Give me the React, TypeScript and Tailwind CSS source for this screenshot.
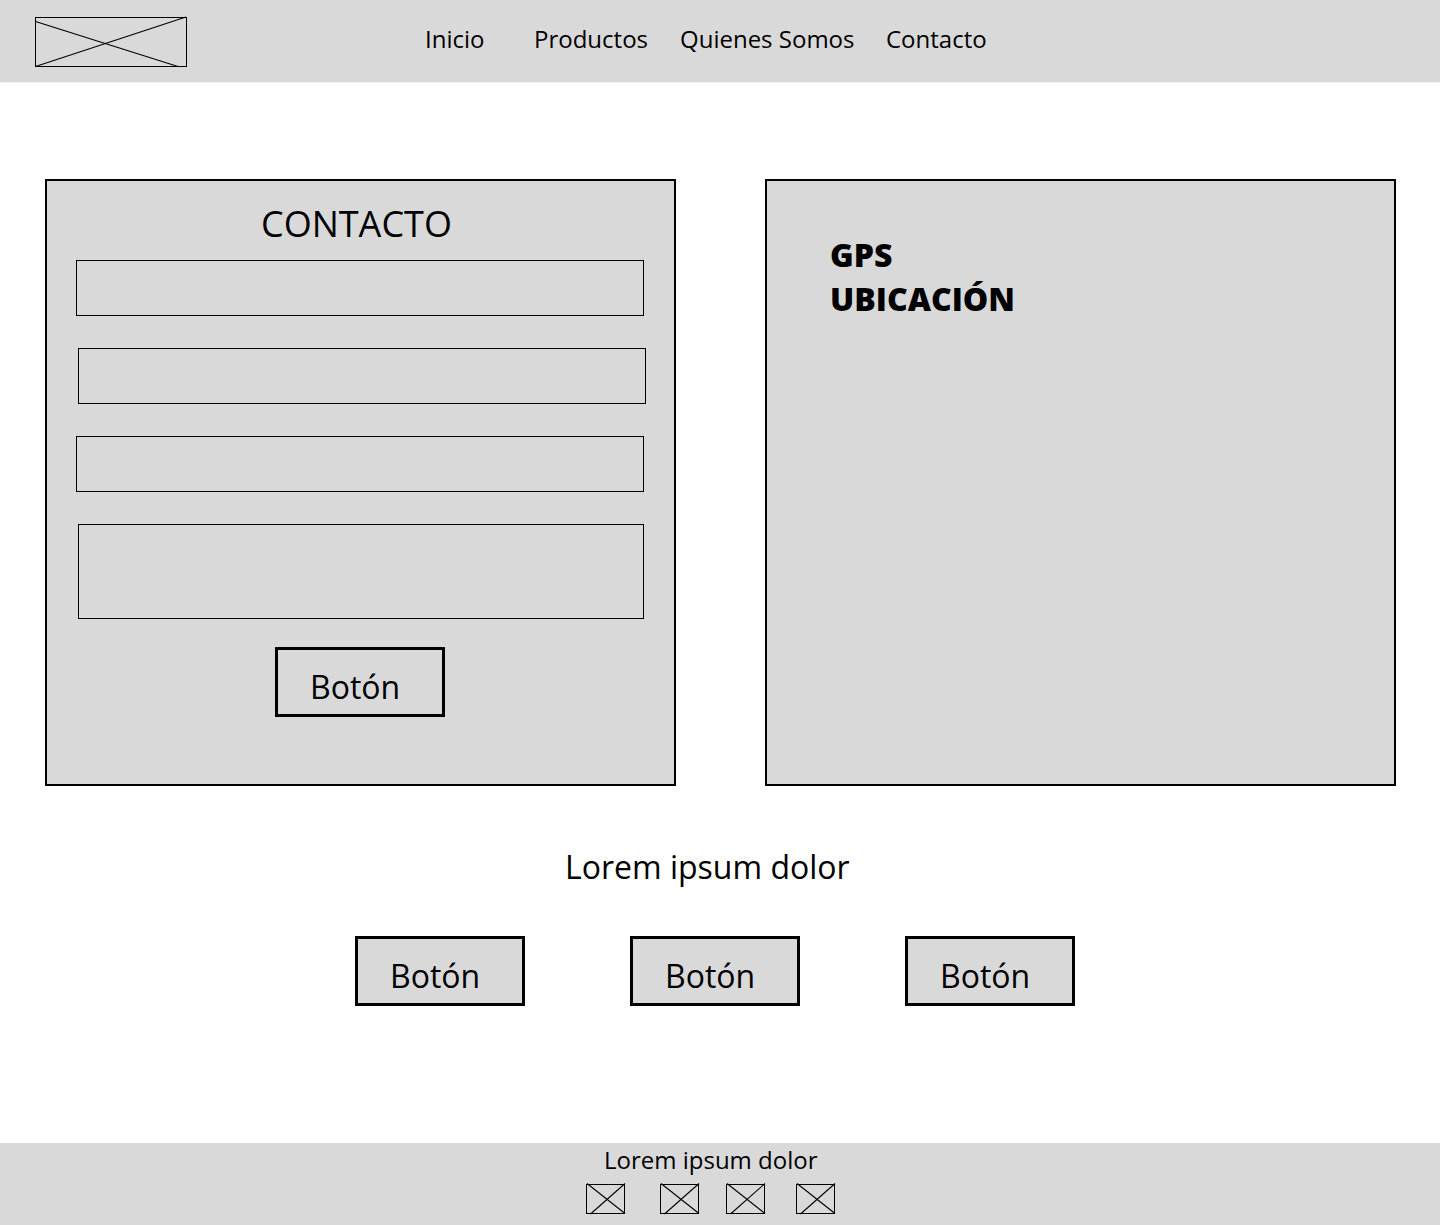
import React from "react";

const font = "font-['Open_Sans',sans-serif]";

// the crossing lines are not corner to corner in the wireframe, so they use px coords
const LogoCross = () => (
  <svg className="block w-[152px] h-[50px] overflow-visible -ml-px -mt-px" viewBox="0 0 152 50">
    <line x1="0.5" y1="4.5" x2="143" y2="49.5" stroke="#000" strokeWidth="1.1" />
    <line x1="0.5" y1="49.5" x2="151" y2="0" stroke="#000" strokeWidth="1.1" />
  </svg>
);

const SmallCross = () => (
  <svg className="block w-[39px] h-[30px] overflow-visible -ml-px -mt-px" viewBox="0 0 39 30">
    <line x1="1" y1="-0.5" x2="39" y2="29.5" stroke="#000" strokeWidth="1.1" />
    <line x1="4.5" y1="30" x2="39" y2="-0.5" stroke="#000" strokeWidth="1.1" />
  </svg>
);

const Boton = ({ className = "" }: { className?: string }) => (
  <button className={`block w-[170px] h-[70px] border-[3px] border-black bg-[#d9d9d9] pl-[32px] pt-[10px] text-left text-[32px] leading-[44px] text-black ${className}`}>
    Botón
  </button>
);

const Field = ({ className }: { className: string }) => (
  <div className={`border border-black bg-[#d9d9d9] ${className}`} />
);

const App: React.FC = () => {
  return (
    <div className={`${font} antialiased w-[1440px] h-[1225px] bg-white text-black flex flex-col`}>
      <header className="h-[83px] bg-[#d9d9d9] border-b border-[#f0f0f0] flex items-start shrink-0">
        <div className="ml-[35px] mt-[17px] w-[152px] h-[50px] border border-black">
          <LogoCross />
        </div>
        <nav className="flex ml-[238px] mt-[22px] text-[24px] leading-[33px]">
          <a className="w-[109px]">Inicio</a>
          <a className="w-[146px]">Productos</a>
          <a className="w-[206px]">Quienes Somos</a>
          <a>Contacto</a>
        </nav>
      </header>

      <main className="flex pl-[45px] pt-[96px] gap-[89px] shrink-0">
        <section className="w-[631px] h-[607px] border-2 border-black bg-[#d9d9d9]">
          <h1 className="mt-[18px] ml-[214px] text-[36px] leading-[49px] font-normal">CONTACTO</h1>
          <Field className="mt-[12px] ml-[29px] w-[568px] h-[56px]" />
          <Field className="mt-[32px] ml-[31px] w-[568px] h-[56px]" />
          <Field className="mt-[32px] ml-[29px] w-[568px] h-[56px]" />
          <Field className="mt-[32px] ml-[31px] w-[566px] h-[95px]" />
          <Boton className="mt-[28px] ml-[228px]" />
        </section>
        <section className="w-[631px] h-[607px] border-2 border-black bg-[#d9d9d9] pl-[63px] pt-[52px]">
          <p className="text-[32px] leading-[44px] font-extrabold">GPS</p>
          <p className="text-[32px] leading-[44px] font-extrabold">UBICACIÓN</p>
        </section>
      </main>

      <p className="mt-[59px] ml-[565px] text-[32px] leading-[44px]">Lorem ipsum dolor</p>

      <div className="mt-[47px] ml-[355px] flex gap-[105px]">
        <Boton />
        <Boton />
        <Boton />
      </div>

      <footer className="mt-auto h-[82px] bg-[#d9d9d9] flex flex-col">
        <p className="ml-[604px] text-[24px] leading-[33px]">Lorem ipsum dolor</p>
        <div className="mt-[8px] ml-[586px] flex">
          <div className="w-[39px] h-[30px] border border-black"><SmallCross /></div>
          <div className="ml-[35px] w-[39px] h-[30px] border border-black"><SmallCross /></div>
          <div className="ml-[27px] w-[39px] h-[30px] border border-black"><SmallCross /></div>
          <div className="ml-[31px] w-[39px] h-[30px] border border-black"><SmallCross /></div>
        </div>
      </footer>
    </div>
  );
};

export default App;
